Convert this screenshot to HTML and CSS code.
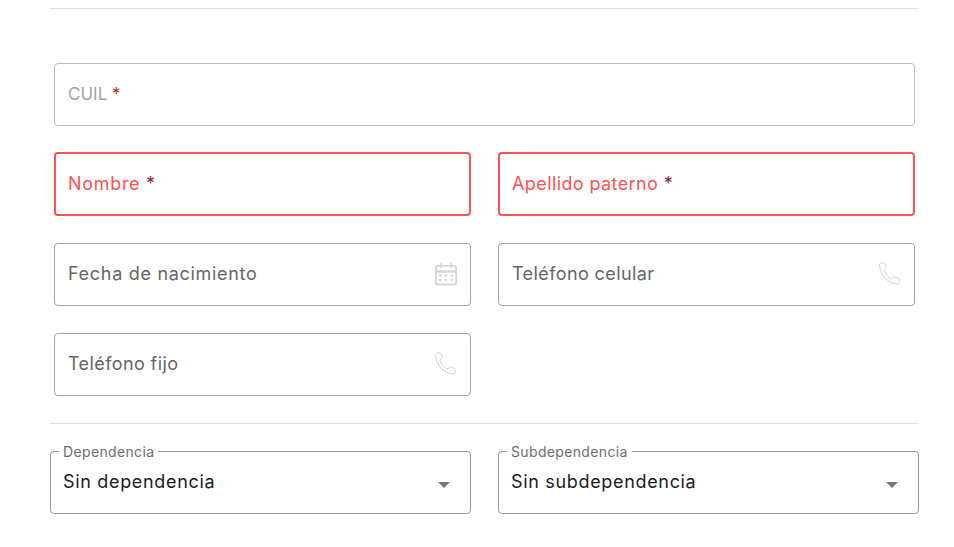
FILE: index.html
```html
<!DOCTYPE html>
<html lang="es">
<head>
  <meta charset="UTF-8">
  <meta name="viewport" content="width=device-width, initial-scale=1.0">
  <title>Datos personales</title>
  <link rel="stylesheet" href="styles.css">
</head>
<body>

  <div class="page">
    <hr class="divider divider-top">

    <div class="form-grid">
      <div class="field wide">
        <span class="field-label muted">CUIL <span class="req">*</span></span>
      </div>

      <div class="field error">
        <span class="field-label">Nombre <span class="req">*</span></span>
      </div>
      <div class="field error">
        <span class="field-label snug">Apellido paterno <span class="req">*</span></span>
      </div>

      <div class="field">
        <span class="field-label">Fecha de nacimiento</span>
        <svg class="icon" width="24" height="24" viewBox="0 0 24 24" fill="none" stroke="#d6d6d6" stroke-width="1.8">
          <rect x="1.9" y="3.900" width="20.200" height="18.600" rx="1.500"/>
          <path d="M2 9.500H22" stroke-width="2.400"/>
          <path d="M7 .8V6M17 .8V6"/>
          <path d="M5 13.500h2.500M10.750 13.500h2.500M16.500 13.500h2.500M5 18h2.500M10.750 18h2.500M16.500 18h2.500" stroke-width="2"/>
        </svg>
      </div>
      <div class="field">
        <span class="field-label snug">Teléfono celular</span>
        <svg class="icon" width="24" height="24" viewBox="0 0 24 24" fill="none" stroke="#d4d4d4" stroke-width="1">
          <path d="M3.2 1.2 5.6.8c.6-.1 1 .2 1.2.7l1.400 3.600c.2.5 0 1-.4 1.300L6.300 7.600c-.4.3-.5.8-.3 1.300 1.500 3.400 3.800 6 7 8 .5.300 1 .2 1.300-.2l1.200-1.400c.4-.4.900-.5 1.400-.3l4.300 1.900c.5.200.8.700.6 1.200l-.7 2.500c-.3.900-1 1.500-2 1.400C10 21.300 2.800 14 1.500 3.300c-.1-1 .6-1.900 1.700-2.100Z"/>
        </svg>
      </div>

      <div class="field">
        <span class="field-label snug">Teléfono fijo</span>
        <svg class="icon" width="24" height="24" viewBox="0 0 24 24" fill="none" stroke="#d4d4d4" stroke-width="1">
          <path d="M3.2 1.2 5.6.8c.6-.1 1 .2 1.2.7l1.400 3.600c.2.5 0 1-.4 1.300L6.300 7.600c-.4.3-.5.8-.3 1.300 1.500 3.400 3.800 6 7 8 .5.300 1 .2 1.300-.2l1.200-1.400c.4-.4.900-.5 1.400-.3l4.300 1.900c.5.200.8.700.6 1.200l-.7 2.500c-.3.900-1 1.500-2 1.400C10 21.300 2.800 14 1.500 3.300c-.1-1 .6-1.900 1.700-2.100Z"/>
        </svg>
      </div>
    </div>

    <hr class="divider divider-mid">

    <div class="select-grid">
      <div class="select-box">
        <span class="select-label">Dependencia</span>
        <span class="select-value">Sin dependencia</span>
        <span class="caret"></span>
      </div>
      <div class="select-box">
        <span class="select-label">Subdependencia</span>
        <span class="select-value">Sin subdependencia</span>
        <span class="caret"></span>
      </div>
    </div>
  </div>

</body>
</html>
```

FILE: styles.css
```css
body {
  font-family: 'Inter', 'Liberation Sans', sans-serif;
  background: #fff;
  margin: 0;
  overflow: hidden;
}

.page {
  width: 869px;
  margin-left: 50px;
  padding-top: 8px;
}

.divider {
  border: none;
  border-top: 1px solid #e2e2e2;
  margin: 0;
}

.divider-mid {
  margin-top: 27px;
}

.form-grid {
  display: grid;
  grid-template-columns: 417px 417px;
  column-gap: 27px;
  grid-auto-rows: 63px;
  row-gap: 27px;
  padding: 54px 4px 0;
}

.field {
  display: flex;
  align-items: center;
  justify-content: space-between;
  box-sizing: border-box;
  padding: 0 12px 2px 13px;
  border: 1px solid #a3a3a3;
  border-radius: 4px;
}

.field.wide {
  grid-column: 1 / 3;
  border-color: #bdbdbd;
}

.field.error {
  border: 2px solid #ff5252;
  padding: 0 12px 2px;
  height: 64px;
  margin-top: -1px;
}

.field-label {
  font-size: 18px;
  letter-spacing: 0.7px;
  color: #666;
}

.field-label.snug {
  letter-spacing: 0.4px;
}

.field-label.muted {
  font-size: 17px;
  letter-spacing: 0;
  color: #a3a3a3;
}

.field.error .field-label {
  color: #ff5252;
}

.req {
  color: #b0341c;
}

.field.error .req {
  color: #8a2a35;
}

.icon {
  flex: none;
}

.select-grid {
  display: grid;
  grid-template-columns: 421px 421px;
  column-gap: 27px;
  padding-top: 27px;
}

.select-box {
  position: relative;
  display: flex;
  align-items: center;
  justify-content: space-between;
  box-sizing: border-box;
  height: 63px;
  padding: 0 20px 2px 12px;
  border: 1px solid #9a9a9a;
  border-radius: 4px;
}

.select-label {
  position: absolute;
  top: -8px;
  left: 8px;
  padding: 0 4px;
  background: #fff;
  font-size: 14px;
  letter-spacing: 0.35px;
  line-height: 16px;
  color: #6e6e6e;
}

.select-value {
  font-size: 18px;
  letter-spacing: 0.67px;
  color: #1b1b1f;
}

.caret {
  width: 0;
  height: 0;
  margin-top: 6px;
  border-left: 6px solid transparent;
  border-right: 6px solid transparent;
  border-top: 6px solid #76767a;
}
```
